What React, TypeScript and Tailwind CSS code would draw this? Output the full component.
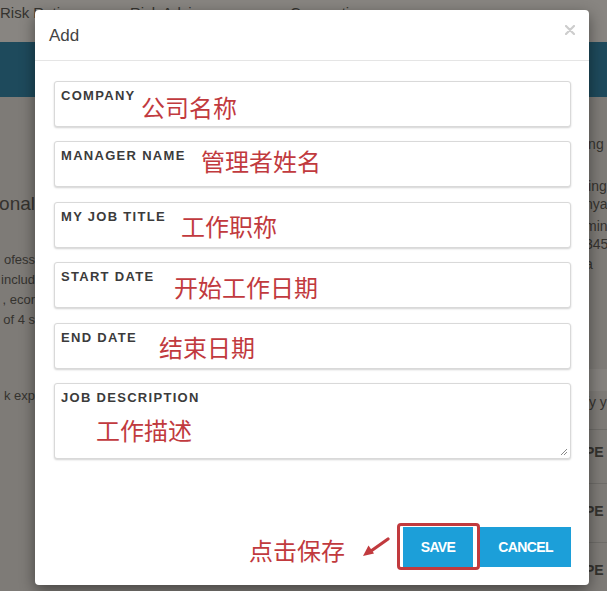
import React from "react";

const fields = [
  { label: "COMPANY", note: "公司名称", pos: "left-[86px] top-[13px]" },
  { label: "MANAGER NAME", note: "管理者姓名", pos: "left-[146px] top-[7px]" },
  { label: "MY JOB TITLE", note: "工作职称", pos: "left-[126px] top-[11px]" },
  { label: "START DATE", note: "开始工作日期", pos: "left-[119px] top-[12px]" },
  { label: "END DATE", note: "结束日期", pos: "left-[104px] top-[11px]" },
];

const sans = "font-['Liberation_Sans',Arial,sans-serif]";
const cjk = "font-['Noto_Sans_CJK_SC','Noto_Sans',sans-serif]";

function Field({ label, note, pos }: { label: string; note: string; pos: string }) {
  return (
    <div className="relative h-[46px] rounded-[3px] border border-[#d9d9d9] bg-white shadow-[0_1px_2px_rgba(0,0,0,0.18)] pl-[6px] pt-[7px]">
      <div className={`${sans} text-[13px] leading-none font-bold tracking-[1.3px] text-[#3b3b3b]`}>{label}</div>
      <div className={`absolute ${pos} ${cjk} text-[24px] leading-none text-[#c13a3e]`}>{note}</div>
    </div>
  );
}

export default function App() {
  return (
    <div className={`relative w-[607px] h-[591px] overflow-hidden bg-[#7e7b77] ${sans}`}>
      {/* background page */}
      <div className="flex flex-col h-full">
        <div className="h-[42px] bg-[#888581] flex items-start pt-[4px] text-[15px] leading-[18px] text-[#34332f]">
          <span className="w-[130px] whitespace-nowrap">Risk Rating</span>
          <span className="w-[160px] whitespace-nowrap">Risk Advisor</span>
          <span className="whitespace-nowrap">Connections</span>
        </div>
        <div className="h-[55px] bg-[#1e4a5c]" />
        <div className="flex-1 flex justify-between">
          <div className="w-[35px] overflow-hidden flex flex-col items-end text-[#35332f]">
            <div className="mt-[94px] text-[19px] leading-[26px] whitespace-nowrap">onal</div>
            <div className="mt-[33px] text-[13px] leading-[20px] whitespace-nowrap">ofess</div>
            <div className="text-[13px] leading-[20px] whitespace-nowrap">includ</div>
            <div className="text-[13px] leading-[20px] whitespace-nowrap">, ecor</div>
            <div className="text-[13px] leading-[20px] whitespace-nowrap">of 4 s</div>
            <div className="mt-[56px] text-[13px] leading-[20px] whitespace-nowrap">k exp</div>
          </div>
          <div className="w-[22px] overflow-hidden flex flex-col text-[#35332f] text-[14px] leading-[18px]">
            <div className="mt-[38px] whitespace-nowrap">ing</div>
            <div className="mt-[24px] whitespace-nowrap">ling</div>
            <div className="whitespace-nowrap">nya</div>
            <div className="mt-[4px] whitespace-nowrap">min</div>
            <div className="whitespace-nowrap">345</div>
            <div className="mt-[2px] whitespace-nowrap">a</div>
            <div className="mt-[96px] h-[22px] bg-[#85827e]" />
            <div className="mt-[2px] whitespace-nowrap">fy y</div>
            <div className="mt-[18px] border-t border-[#6f6d69] pt-[13px] whitespace-nowrap font-bold">PE</div>
            <div className="mt-[22px] border-t border-[#6f6d69] pt-[18px] whitespace-nowrap font-bold">PE</div>
            <div className="mt-[22px] border-t border-[#6f6d69] pt-[18px] whitespace-nowrap font-bold">PE</div>
          </div>
        </div>
      </div>

      {/* modal */}
      <div className="absolute left-[35px] top-[10px] w-[554px] h-[575px] bg-white rounded-[4px] shadow-[0_5px_15px_rgba(0,0,0,0.45)] flex flex-col">
        <div className="h-[51px] border-b border-[#e5e5e5] flex items-start justify-between pl-[14px] pr-[14px] pt-[17px] shrink-0">
          <div className="text-[17px] leading-none text-[#444]">Add</div>
          <svg width="10" height="10" viewBox="0 0 10 10" className="mt-[-2px]">
            <path d="M1 1 L9 9 M9 1 L1 9" stroke="#cdcdcd" strokeWidth="2.2" strokeLinecap="round" />
          </svg>
        </div>
        <div className="flex-1 flex flex-col pl-[19px] pr-[18px] pt-[20px] pb-[18px]">
          <div className="flex flex-col gap-[14.4px]">
            {fields.map((f) => (
              <Field key={f.label} {...f} />
            ))}
            <div className="relative h-[76px] rounded-[3px] border border-[#d9d9d9] bg-white shadow-[0_1px_2px_rgba(0,0,0,0.18)] pl-[6px] pt-[7px]">
              <div className={`${sans} text-[13px] leading-none font-bold tracking-[1.3px] text-[#3b3b3b]`}>JOB DESCRIPTION</div>
              <div className={`absolute left-[41px] top-[34px] ${cjk} text-[24px] leading-none text-[#c13a3e]`}>工作描述</div>
              <svg width="9" height="9" viewBox="0 0 9 9" className="absolute right-[2px] bottom-[2px]">
                <path d="M8 2 L2 8 M8 5 L5 8" stroke="#8a8a8a" strokeWidth="1" />
              </svg>
            </div>
          </div>
          <div className="mt-auto flex items-center justify-end">
            <div className={`${cjk} text-[24px] leading-none text-[#c13a3e] mt-[6px]`}>点击保存</div>
            <svg width="30" height="24" viewBox="0 0 30 24" className="ml-[15px]">
              <path d="M28 4 L11 16" stroke="#c13a3e" strokeWidth="3.2" strokeLinecap="round" />
              <polygon points="3,21 8.5,10.5 14,18.5" fill="#c13a3e" />
            </svg>
            <div className="relative ml-[13px]">
              <div className="absolute -left-[6px] -right-[7px] -top-[4px] -bottom-[3px] border-[3px] border-[#c13a3e] rounded-[4px]" />
              <div className="w-[70px] h-[40px] bg-[#1c9fd9] flex items-center justify-center text-white font-bold text-[14px] tracking-[-0.6px]">
                SAVE
              </div>
            </div>
            <div className="ml-[7px] w-[91px] h-[40px] bg-[#1c9fd9] flex items-center justify-center text-white font-bold text-[14px] tracking-[-0.6px]">
              CANCEL
            </div>
          </div>
        </div>
      </div>
    </div>
  );
}
